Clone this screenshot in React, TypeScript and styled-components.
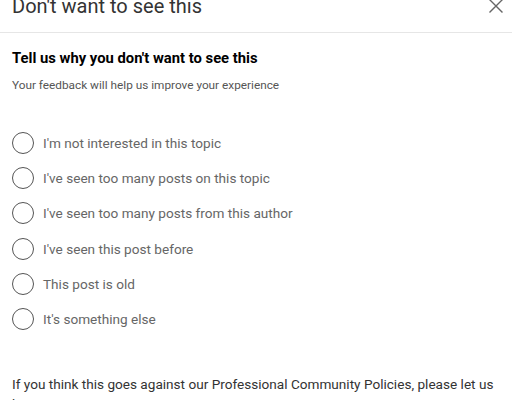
import React, { useState } from "react";
import styled, { createGlobalStyle } from "styled-components";

const GlobalStyle = createGlobalStyle`
  body {
    margin: 0;
    background: #ffffff;
    font-family: Roboto, "Liberation Sans", sans-serif;
    overflow: hidden;
  }
`;

const reasons = [
  "I'm not interested in this topic",
  "I've seen too many posts on this topic",
  "I've seen too many posts from this author",
  "I've seen this post before",
  "This post is old",
  "It's something else",
];

export default function App() {
  const [picked, setPicked] = useState<number>(-1);

  return (
    <>
      <GlobalStyle />
      <StyledDialog>
        <StyledHeader>
          <StyledTitle>Don't want to see this</StyledTitle>
          <StyledClose aria-label="Dismiss">
            <svg width="16" height="16" viewBox="0 0 16 16">
              <path
                d="M1.5 1.5 L14.5 14.5 M14.5 1.5 L1.5 14.5"
                stroke="#666"
                strokeWidth="1.4"
                fill="none"
              />
            </svg>
          </StyledClose>
        </StyledHeader>
        <StyledBody>
          <StyledHeading>Tell us why you don't want to see this</StyledHeading>
          <StyledSub>Your feedback will help us improve your experience</StyledSub>
          <StyledList>
            {reasons.map((el, i) => (
              <StyledOption key={el} onClick={() => setPicked(i)}>
                <StyledRadio checked={picked === i} />
                <span>{el}</span>
              </StyledOption>
            ))}
          </StyledList>
          <StyledFooter>
            If you think this goes against our Professional Community Policies,
            please let us know.
          </StyledFooter>
        </StyledBody>
      </StyledDialog>
    </>
  );
}

const StyledDialog = styled.div`
  width: 512px;
  margin-top: -21px;
`;

const StyledHeader = styled.div`
  display: flex;
  align-items: center;
  justify-content: space-between;
  height: 53px;
  padding: 0 8px 0 12px;
  border-bottom: 1px solid #e6e6e6;
`;

const StyledTitle = styled.h2`
  margin: 0;
  font-size: 20px;
  font-weight: 400;
  color: #333;
`;

const StyledClose = styled.button`
  border: none;
  background: none;
  padding: 0;
  width: 16px;
  height: 16px;
  display: flex;
  cursor: pointer;
`;

const StyledBody = styled.div`
  padding: 15px 12px 0;
`;

const StyledHeading = styled.h3`
  margin: 0;
  font-size: 14.8px;
  font-weight: 700;
  color: #000;
  line-height: 20px;
`;

const StyledSub = styled.p`
  margin: 9px 0 0;
  font-size: 11.8px;
  color: #555;
  line-height: 16px;
`;

const StyledList = styled.div`
  margin-top: 39px;
  display: flex;
  flex-direction: column;
  gap: 13.2px;
`;

const StyledOption = styled.label`
  display: flex;
  align-items: center;
  gap: 9px;
  font-size: 13.6px;
  color: #666;
  cursor: pointer;
`;

const StyledRadio = styled.span<{ checked: boolean }>`
  box-sizing: border-box;
  width: 22px;
  height: 22px;
  border-radius: 50%;
  border: 1px solid ${(p) => (p.checked ? "#0a66c2" : "#555")};
  box-shadow: ${(p) => (p.checked ? "inset 0 0 0 5px #0a66c2" : "none")};
`;

const StyledFooter = styled.p`
  margin: 44px 0 0;
  font-size: 13.6px;
  color: #333;
  line-height: 20px;
`;
